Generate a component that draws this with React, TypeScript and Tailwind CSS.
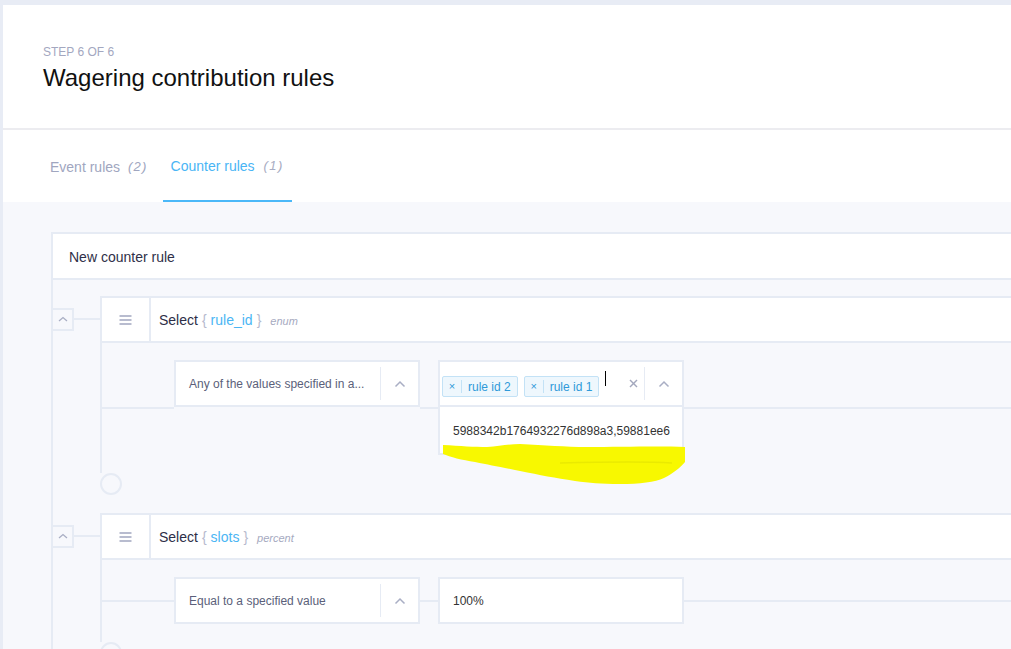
import React from "react";

const B = "border-[#e6ebf4]";

function ChevronUp() {
  return (
    <svg width="12" height="8" viewBox="0 0 12 8" fill="none">
      <polyline points="1.5,6.5 6,2 10.5,6.5" stroke="#a9aec4" strokeWidth="1.5" />
    </svg>
  );
}

function Hamburger() {
  return (
    <svg width="13" height="10" viewBox="0 0 13 10" fill="none">
      <line x1="0.5" y1="1" x2="12.5" y2="1" stroke="#9aa0bb" strokeWidth="1.4" />
      <line x1="0.5" y1="5" x2="12.5" y2="5" stroke="#9aa0bb" strokeWidth="1.4" />
      <line x1="0.5" y1="9" x2="12.5" y2="9" stroke="#9aa0bb" strokeWidth="1.4" />
    </svg>
  );
}

function ClearX() {
  return (
    <svg width="9" height="9" viewBox="0 0 9 9" fill="none">
      <line x1="1" y1="1" x2="8" y2="8" stroke="#a3a8bd" strokeWidth="1.4" />
      <line x1="8" y1="1" x2="1" y2="8" stroke="#a3a8bd" strokeWidth="1.4" />
    </svg>
  );
}

function Tag({ label }: { label: string }) {
  return (
    <div className="flex items-center h-[21px] border border-[#c3e2f6] bg-[#eef7fd] rounded-[2px] text-[12px] text-[#2f9ad9]">
      <span className="w-[19px] h-[13px] flex items-center justify-center border-r border-[#c3e2f6] text-[11px] leading-none">×</span>
      <span className="pl-[6px] pr-[6px] leading-none">{label}</span>
    </div>
  );
}

function CondBox({ text }: { text: string }) {
  return (
    <div className={`w-[246px] h-[47px] border-2 ${B} bg-white flex items-center self-start shrink-0`}>
      <div className="flex-1 pl-[13px] text-[12px] text-[#5b5f7a] whitespace-nowrap overflow-hidden">{text}</div>
      <div className="w-[1px] h-[33px] bg-[#e6ebf4]" />
      <div className="w-[37px] flex items-center justify-center">
        <ChevronUp />
      </div>
    </div>
  );
}

function Seg({ w }: { w: string }) {
  return <div className={`${w} h-[2px] bg-[#e6ebf4] self-center shrink-0`} />;
}

function Block({
  field,
  type,
  children,
}: {
  field: string;
  type: string;
  children: React.ReactNode;
}) {
  return (
    <div className="flex ml-[-2px]">
      <div className="w-[49px] shrink-0">
        <div className="h-[46px] flex items-center">
          <div className={`w-[23px] h-[23px] border-2 ${B} bg-[#f7f8fc] flex items-center justify-center`}>
            <svg width="10" height="6" viewBox="0 0 10 6" fill="none">
              <polyline points="1,5 5,1.5 9,5" stroke="#a9aec4" strokeWidth="1.3" />
            </svg>
          </div>
          <div className="flex-1 h-[2px] bg-[#e6ebf4]" />
        </div>
      </div>
      <div className="flex-1 flex flex-col">
        <div className={`h-[47px] border-2 border-r-0 ${B} bg-white flex items-center`}>
          <div className={`w-[49px] h-full border-r-2 ${B} flex items-center justify-center`}>
            <Hamburger />
          </div>
          <div className="pl-[8px] pt-[2px] text-[14px] text-[#2d2e47] flex items-baseline whitespace-nowrap">
            <span>Select</span>
            <span className="ml-[4px] text-[#b6bace]">{"{"}</span>
            <span className="ml-[4px] text-[#4bb6f4]">{field}</span>
            <span className="ml-[4px] text-[#b6bace]">{"}"}</span>
            <span className="ml-[9px] text-[11px] italic text-[#a6aabf]">{type}</span>
          </div>
        </div>
        <div className={`border-l-2 ${B} pt-[17px] pb-[18px]`}>{children}</div>
        <div className={`w-[22px] h-[22px] rounded-full border-2 ${B} bg-[#f7f8fc]`} />
      </div>
    </div>
  );
}

export default function App() {
  return (
    <div className="relative w-[1011px] h-[649px] overflow-hidden bg-[#e8ecf5] pt-[5px] pl-[3px] font-['Liberation_Sans',Arial,sans-serif]">
      <div className="bg-white w-[1100px]">
        <div className="h-[125px] border-b-2 border-[#ececf0] pl-[40px] pt-[40px]">
          <div className="text-[12px] leading-[14px] text-[#a3a7bf] uppercase">Step 6 of 6</div>
          <div className="mt-[5px] text-[24px] leading-[28px] text-[#111]">Wagering contribution rules</div>
        </div>
        <div className="h-[72px] flex pl-[39px] gap-[5px]">
          <div className="h-full flex items-center pl-[8px] pr-[10px] pt-[2px] text-[14px] text-[#a0a6c0]">
            <span>Event rules</span>
            <span className="ml-[8px] text-[13px] italic tracking-[1.2px]">(2)</span>
          </div>
          <div className="h-full flex flex-col">
            <div className="flex-1 flex items-center pl-[8px] pr-[8px] pt-[2px] text-[14px] text-[#49b5f5]">
              <span>Counter rules</span>
              <span className="ml-[9px] text-[13px] italic tracking-[1.4px] text-[#a8acc2]">(1)</span>
            </div>
            <div className="h-[2px] bg-[#4bb8f8]" />
          </div>
        </div>
        <div className="bg-[#f7f8fc] pl-[48px] pt-[30px] h-[460px]">
          <div className={`border-t-2 border-l-2 ${B}`}>
            <div className={`h-[46px] border-b-2 ${B} bg-white flex items-center pl-[16px] pt-[3px] text-[14px] text-[#2f3048]`}>
              New counter rule
            </div>
            <div className="pt-[16px] flex flex-col gap-[18px]">
              <Block field="rule_id" type="enum">
                <div className="flex items-start">
                  <Seg w="w-[72px]" />
                  <CondBox text="Any of the values specified in a..." />
                  <Seg w="w-[18px]" />
                  <div className={`w-[246px] shrink-0 border-2 ${B} bg-white flex flex-col`}>
                    <div className={`h-[45px] border-b-2 ${B} flex items-center`}>
                      <div className="flex items-center gap-[6px] pl-[2px] pt-[6px]">
                        <Tag label="rule id 2" />
                        <Tag label="rule id 1" />
                      </div>
                      <div className="ml-[6px] mb-[10px] w-[1px] h-[15px] bg-black" />
                      <div className="flex-1" />
                      <div className="w-[22px] flex items-center justify-center">
                        <ClearX />
                      </div>
                      <div className="w-[1px] h-[33px] bg-[#e6ebf4]" />
                      <div className="w-[37px] flex items-center justify-center">
                        <ChevronUp />
                      </div>
                    </div>
                    <div className="h-[46px] flex items-center pl-[13px] pt-[2px] text-[12px] text-[#333] whitespace-nowrap overflow-hidden">
                      5988342b1764932276d898a3,59881ee6
                    </div>
                  </div>
                  <div className="flex-1 h-[2px] bg-[#e6ebf4] self-center" />
                </div>
              </Block>
              <Block field="slots" type="percent">
                <div className="flex items-start">
                  <Seg w="w-[72px]" />
                  <CondBox text="Equal to a specified value" />
                  <Seg w="w-[18px]" />
                  <div className={`w-[246px] h-[47px] shrink-0 border-2 ${B} bg-white flex items-center pl-[13px] text-[12px] text-[#333]`}>
                    100%
                  </div>
                  <div className="flex-1 h-[2px] bg-[#e6ebf4] self-center" />
                </div>
              </Block>
            </div>
          </div>
        </div>
      </div>
      <svg className="absolute left-0 top-0 pointer-events-none" width="1011" height="649" viewBox="0 0 1011 649">
        <path
          d="M443,445 C460,446 475,447 487,447 C500,446 510,444 520,444 C545,445 565,447 587,447 C620,447 660,446 685,447 L685,462 C680,468 672,474 664,478 C655,482 640,484 620,484 C600,484 590,483 575,481 C555,478 540,475 520,471 C500,467 490,465 475,462 C462,460 450,457 443,454 Z"
          fill="#f8f800"
        />
        <path d="M560,463 C600,462 640,461 672,463" stroke="#eaea00" strokeWidth="1.5" fill="none" />
      </svg>
    </div>
  );
}
